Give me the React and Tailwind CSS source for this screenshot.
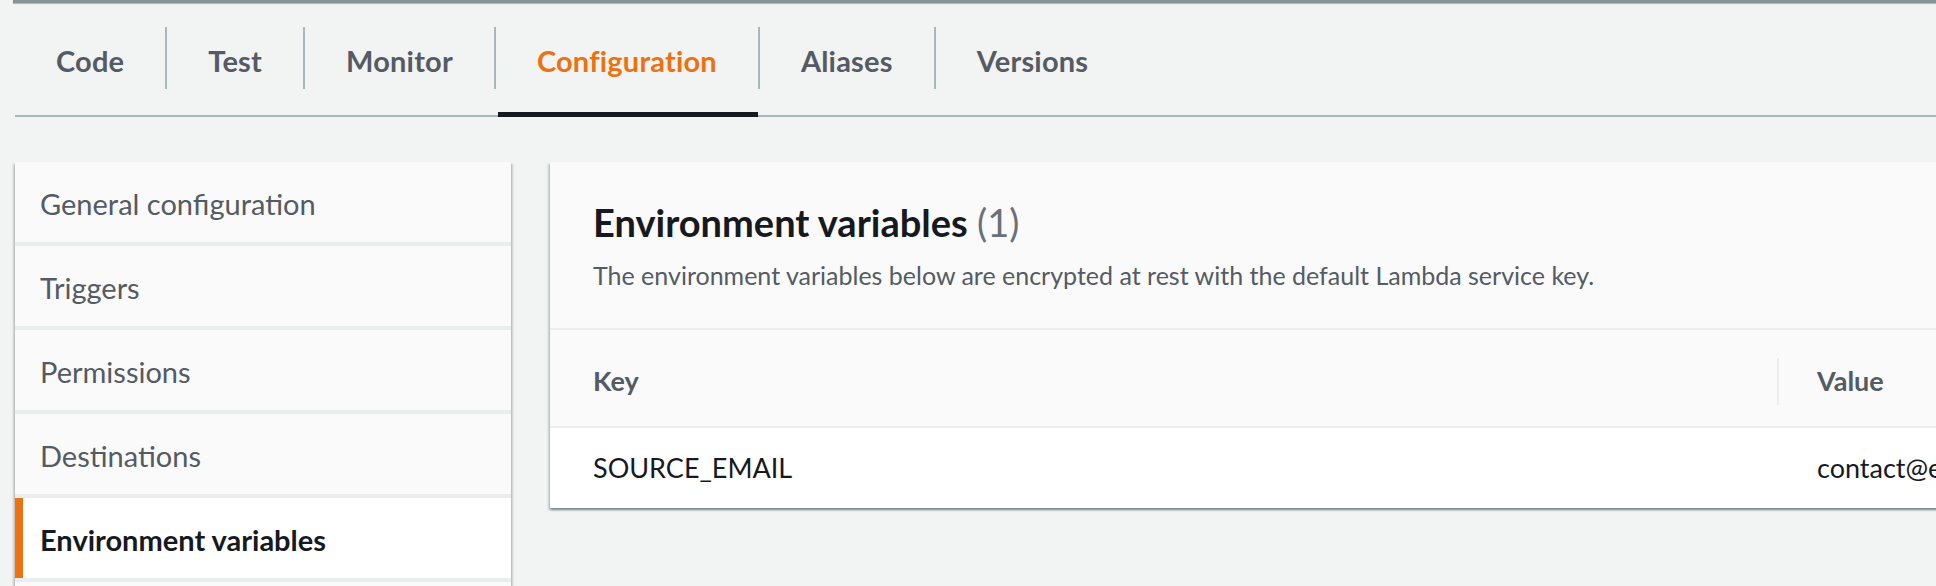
import React from "react";

const tabs = ["Code", "Test", "Monitor", "Configuration", "Aliases", "Versions"];
const menu = [
    "General configuration",
    "Triggers",
    "Permissions",
    "Destinations",
    "Environment variables",
    "",
];

const panelShadow =
    "shadow-[0_2px_2px_0_rgba(0,28,36,0.3),2px_2px_2px_0_rgba(0,28,36,0.15),-2px_2px_2px_0_rgba(0,28,36,0.15)]";

const App = () => {
    return (
        <div className="w-[1936px] h-[586px] overflow-hidden bg-[#f2f3f3] font-['Lato',sans-serif]">

            {/* --------------------- top edge --------------------- */}
            <div className="ml-[13px] h-[3px] bg-[#879596] shadow-[0_1px_1px_rgba(0,28,36,0.3)]"></div>

            {/* --------------------- tabs --------------------- */}
            <div className="ml-[15px] flex h-[114px] border-b-2 border-[#aab7b8]">
                {tabs.map((t, i) => {
                    const active = t === "Configuration";
                    return (
                        <div key={t} className="flex items-stretch">
                            {i > 0 && (
                                <div className="mt-[24px] h-[62px] w-[2px] bg-[#aab7b8]"></div>
                            )}
                            <div
                                className={
                                    "relative flex items-center pt-[3px] px-[41px] text-[29px] font-bold tracking-[0.2px] " +
                                    (active ? "text-[#ec7211]" : "text-[#545b64]")
                                }
                            >
                                {t}
                                {active && (
                                    <div className="absolute left-[2px] right-0 -bottom-[2px] h-[5px] bg-[#16191f]"></div>
                                )}
                            </div>
                        </div>
                    );
                })}
            </div>

            {/* --------------------- content --------------------- */}
            <div className="flex gap-[39px] pl-[15px] pt-[45px]">

                {/* side menu */}
                <div className={"w-[496px] shrink-0 flex flex-col gap-[4px] bg-[#eaeded] " + panelShadow}>
                    {menu.map((m, i) => {
                        const active = m === "Environment variables";
                        return (
                            <div
                                key={i}
                                className={
                                    "relative h-[80px] flex items-center pl-[25px] pt-[4px] text-[29px] " +
                                    (active ? "bg-white font-bold text-[#16191f]" : "bg-[#fafafa] text-[#545b64]")
                                }
                            >
                                {active && <div className="absolute left-0 top-0 bottom-0 w-[8px] bg-[#ec7211]"></div>}
                                {m}
                            </div>
                        );
                    })}
                </div>

                {/* environment variables panel */}
                <div className={"w-[1500px] shrink-0 self-start bg-white " + panelShadow}>
                    <div className="bg-[#fafafa] h-[168px] px-[43px] pt-[35px] border-b-2 border-[#eaeded]">
                        <h2 className="text-[38px] font-bold text-[#16191f] leading-[50px]">
                            Environment variables <span className="font-normal text-[#687078]">(1)</span>
                        </h2>
                        <p className="mt-[10px] text-[25px] text-[#545b64] leading-[36px]">
                            The environment variables below are encrypted at rest with the default Lambda service key.
                        </p>
                    </div>

                    {/* table header */}
                    <div className="flex h-[98px] items-center pt-[6px] bg-[#fafafa] border-b-2 border-[#eaeded]">
                        <div className="w-[1227px] shrink-0 pl-[43px] text-[27px] font-bold text-[#545b64]">Key</div>
                        <div className="h-[47px] w-[2px] shrink-0 bg-[#eaeded]"></div>
                        <div className="pl-[38px] text-[27px] font-bold text-[#545b64]">Value</div>
                    </div>

                    {/* row */}
                    <div className="flex h-[80px] items-center bg-white">
                        <div className="w-[1229px] shrink-0 pl-[43px] text-[27px] text-[#16191f]">SOURCE_EMAIL</div>
                        <div className="pl-[38px] text-[27px] text-[#16191f] whitespace-nowrap">contact@example.com</div>
                    </div>
                </div>
            </div>
        </div>
    );
};

export default App;
